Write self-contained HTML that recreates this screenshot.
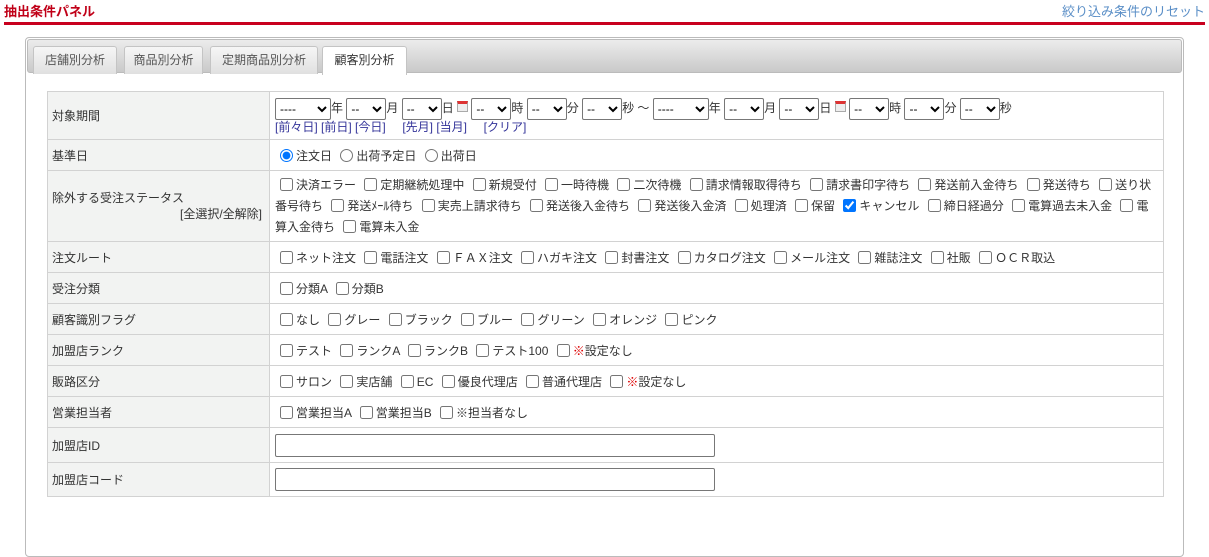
<!DOCTYPE html>
<html><head><meta charset="utf-8"><style>
*{box-sizing:border-box}
body{margin:0;width:1209px;height:504px;overflow:hidden;background:#fff;font-family:"Liberation Sans","Noto Sans CJK JP",sans-serif;font-size:12px;color:#333}
.title{position:absolute;left:4px;top:1px;color:#c00018;font-weight:bold;font-size:13px}
.reset{position:absolute;right:4px;top:1px;color:#5b8fc7;font-size:13px}
.line{position:absolute;left:4px;top:22px;width:1201px;height:3px;background:#c8001e}
.panel{position:absolute;left:25px;top:37px;width:1159px;height:520px;border:1px solid #bbb;border-radius:4px}
.tabs{position:absolute;left:1px;top:1px;right:1px;height:34px;background:linear-gradient(#ececec,#c9c9c9);border:1px solid #bbb;border-radius:3px}
.tab{position:absolute;top:6px;height:28px;border:1px solid #c4c4c4;border-bottom:none;border-radius:3px 3px 0 0;background:linear-gradient(#f6f6f6,#e0e0e0);color:#555;line-height:26px;text-align:center}
.tab.on{background:#fff;color:#333;height:29px}
table{position:absolute;left:21px;top:53px;width:1117px;border-collapse:collapse}
td{border:1px solid #d2d2d2;padding:0 5px;vertical-align:middle}
td.l{width:222px;background:#f2f3f2;padding-left:4px}
select{height:22px;font-size:12px;border:1px solid #777;border-radius:2px;background:#fff;margin:0;vertical-align:middle}
.a{color:#339}
input[type=checkbox],input[type=radio]{margin:0 3px 0 5px;vertical-align:-2px;width:13px;height:13px}
.tx{width:440px;height:23px;border:1px solid #777;border-radius:2px}
.cal{display:inline-block;width:11px;height:11px;border:1px solid #aaa;border-top:3px solid #d33;background:#eee;vertical-align:0}
.red{color:#d00}
.st{line-height:21px;white-space:nowrap}
</style></head><body>
<div class="title">抽出条件パネル</div>
<div class="reset">絞り込み条件のリセット</div>
<div class="line"></div>
<div class="panel">
<div class="tabs">
<div class="tab" style="left:5px;width:84px">店舗別分析</div>
<div class="tab" style="left:96px;width:79px">商品別分析</div>
<div class="tab" style="left:182px;width:108px">定期商品別分析</div>
<div class="tab on" style="left:294px;width:85px">顧客別分析</div>
</div>
<table>
<tr style="height:48px"><td class="l">対象期間</td><td style="line-height:15px;padding-top:2px;white-space:nowrap"><select style="width:56px"><option>----</option></select>年 <select style="width:40px"><option>--</option></select>月 <select style="width:40px"><option>--</option></select>日 <span class="cal"></span> <select style="width:40px"><option>--</option></select>時 <select style="width:40px"><option>--</option></select>分 <select style="width:40px"><option>--</option></select>秒 ～ <select style="width:56px"><option>----</option></select>年 <select style="width:40px"><option>--</option></select>月 <select style="width:40px"><option>--</option></select>日 <span class="cal"></span> <select style="width:40px"><option>--</option></select>時 <select style="width:40px"><option>--</option></select>分 <select style="width:40px"><option>--</option></select>秒<br><span class="a">[前々日] [前日] [今日]&nbsp;&nbsp;&nbsp;&nbsp; [先月] [当月]&nbsp;&nbsp;&nbsp;&nbsp; [クリア]</span></td></tr>
<tr style="height:31px"><td class="l">基準日</td><td><input type="radio" checked>注文日 <input type="radio">出荷予定日 <input type="radio">出荷日</td></tr>
<tr style="height:71px"><td class="l" style="line-height:16px">除外する受注ステータス<div style="text-align:right;padding-right:2px">[全選択/全解除]</div></td><td class="st"><input type="checkbox">決済エラー <input type="checkbox">定期継続処理中 <input type="checkbox">新規受付 <input type="checkbox">一時待機 <input type="checkbox">二次待機 <input type="checkbox">請求情報取得待ち <input type="checkbox">請求書印字待ち <input type="checkbox">発送前入金待ち <input type="checkbox">発送待ち <input type="checkbox">送り状<br>番号待ち <input type="checkbox">発送ﾒｰﾙ待ち <input type="checkbox">実売上請求待ち <input type="checkbox">発送後入金待ち <input type="checkbox">発送後入金済 <input type="checkbox">処理済 <input type="checkbox">保留 <input type="checkbox" checked>キャンセル <input type="checkbox">締日経過分 <input type="checkbox">電算過去未入金 <input type="checkbox">電<br>算入金待ち <input type="checkbox">電算未入金</td></tr>
<tr style="height:31px"><td class="l">注文ルート</td><td><input type="checkbox">ネット注文 <input type="checkbox">電話注文 <input type="checkbox">ＦＡＸ注文 <input type="checkbox">ハガキ注文 <input type="checkbox">封書注文 <input type="checkbox">カタログ注文 <input type="checkbox">メール注文 <input type="checkbox">雑誌注文 <input type="checkbox">社販 <input type="checkbox">ＯＣＲ取込</td></tr>
<tr style="height:31px"><td class="l">受注分類</td><td><input type="checkbox">分類A <input type="checkbox">分類B</td></tr>
<tr style="height:31px"><td class="l">顧客識別フラグ</td><td><input type="checkbox">なし <input type="checkbox">グレー <input type="checkbox">ブラック <input type="checkbox">ブルー <input type="checkbox">グリーン <input type="checkbox">オレンジ <input type="checkbox">ピンク</td></tr>
<tr style="height:31px"><td class="l">加盟店ランク</td><td><input type="checkbox">テスト <input type="checkbox">ランクA <input type="checkbox">ランクB <input type="checkbox">テスト100 <input type="checkbox"><span class="red">※</span>設定なし</td></tr>
<tr style="height:31px"><td class="l">販路区分</td><td><input type="checkbox">サロン <input type="checkbox">実店舗 <input type="checkbox">EC <input type="checkbox">優良代理店 <input type="checkbox">普通代理店 <input type="checkbox"><span class="red">※</span>設定なし</td></tr>
<tr style="height:31px"><td class="l">営業担当者</td><td><input type="checkbox">営業担当A <input type="checkbox">営業担当B <input type="checkbox">※担当者なし</td></tr>
<tr style="height:35px"><td class="l">加盟店ID</td><td><input class="tx"></td></tr>
<tr style="height:34px"><td class="l">加盟店コード</td><td><input class="tx"></td></tr>
</table>
</div>
</body></html>
